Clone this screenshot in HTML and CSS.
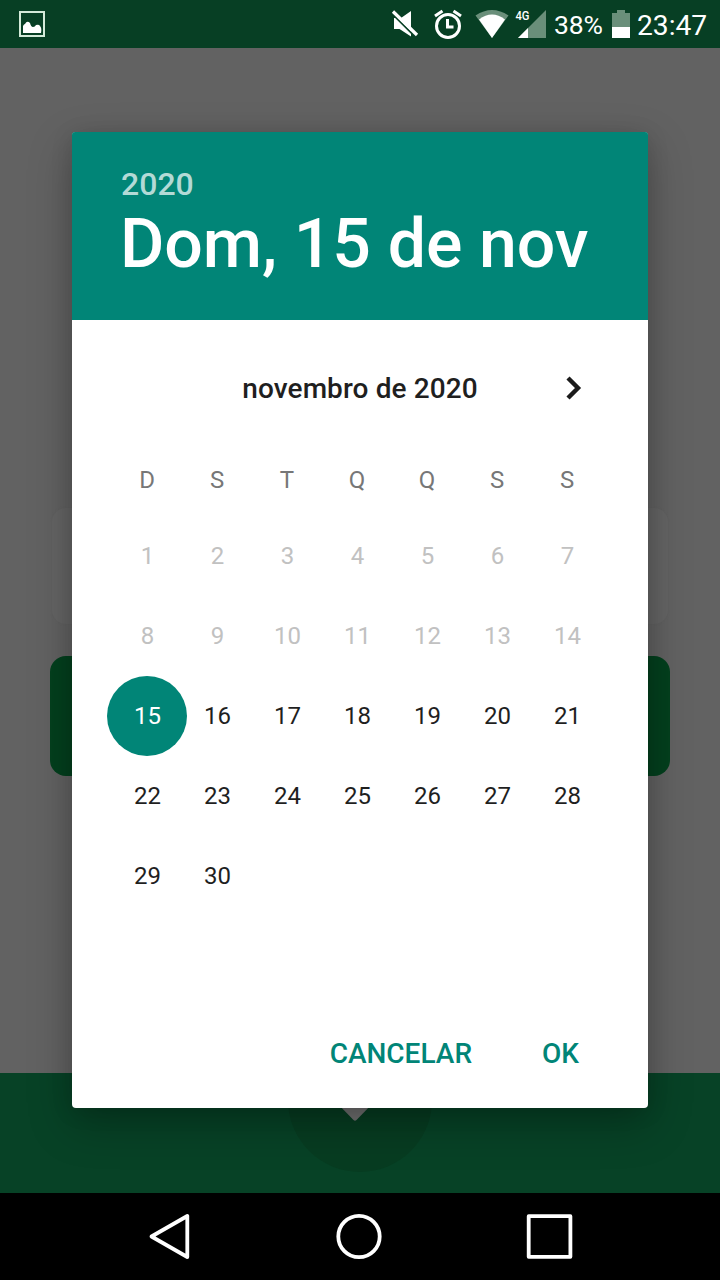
FILE: index.html
```html
<!DOCTYPE html>
<html lang="pt-BR">
<head>
<meta charset="utf-8">
<title>Selecionar data</title>
<link rel="stylesheet" href="styles.css">
</head>
<body>
<div class="screen">
  <header class="status">
    <svg class="status-photo" width="26" height="26" viewBox="0 0 26 26"><rect x="1" y="1" width="24" height="24" fill="none" stroke="#d3ead9" stroke-width="2"/><path d="M4 22v-7q1-2 2-2 2-4 5-1 1 4 3 4 2 0 3-2 3-1 4 1 2 2 1 7z" fill="#fff"/></svg>
    <svg width="170" height="48" viewBox="380 0 170 48">
      <path d="M394 18h7l10-7v25.500l-11.500-7.500H394z" fill="#fff"/>
      <path d="M390 11.500l24 24" stroke="#073f24" stroke-width="1.800"/>
      <path d="M393 11.500l24 23.500" stroke="#fff" stroke-width="3.200"/>
      <circle cx="448" cy="26" r="11.500" fill="none" stroke="#fff" stroke-width="3"/>
      <path d="M447.500 19v8h6M435 16l7.500-5M453.500 11l7.500 5" fill="none" stroke="#fff" stroke-width="3"/>
      <path d="M475.500 15.500q16.500-11 33 0L492 38z" fill="#6a8f7a"/>
      <path d="M479 19.500q13-10 26 0L492 38z" fill="#fff"/>
      <path d="M518 38l28-28v28z" fill="#6a8f7a"/><path d="M518 38l10-10v10z" fill="#fff"/>
      <text class="network" x="515.500" y="20" textLength="14" lengthAdjust="spacingAndGlyphs">4G</text>
    </svg>
    <span class="battery-text">38%</span>
    <svg class="battery" width="18" height="28" viewBox="0 0 18 28"><path d="M0 3h5V0h8v3h5v14H0z" fill="#6a8f7a"/><path d="M0 17h18v11H0z" fill="#fff"/></svg>
    <span class="clock">23:47</span>
  </header>
  <main class="page">
    <div class="field"></div>
    <div class="submit"></div>
  </main>
  <footer class="tabs"><div class="fab"><svg width="40" height="40" viewBox="0 0 40 40"><path d="M20 0l20 20-18.500 19q-1.500 1.500-3 0L0 20z" fill="#707070"/></svg></div></footer>
  <nav class="system">
    <svg width="720" height="87" viewBox="0 1193 720 87" fill="none" stroke="#fff" stroke-width="3.800" stroke-linejoin="round"><path d="M151.500 1236.500l35.800-20.500v41z"/><circle cx="359" cy="1236.500" r="20.700"/><path d="M528.700 1216.200h41.700v40.600h-41.700z"/></svg>
  </nav>
  <section class="dialog">
    <div class="dialog-head"><div class="year">2020</div><div class="date">Dom, 15 de nov</div></div>
    <div class="month"><span class="month-name">novembro de 2020</span>
      <svg class="next" width="16" height="24" viewBox="0 0 16 24"><path d="M2 2L12 12 2 22" fill="none" stroke="#1b1b1b" stroke-width="4.400"/></svg></div>
    <div class="weekdays"><span>D</span><span>S</span><span>T</span><span>Q</span><span>Q</span><span>S</span><span>S</span></div>
    <div class="days">
      <span class="past">1</span><span class="past">2</span><span class="past">3</span><span class="past">4</span><span class="past">5</span><span class="past">6</span><span class="past">7</span>
      <span class="past">8</span><span class="past">9</span><span class="past">10</span><span class="past">11</span><span class="past">12</span><span class="past">13</span><span class="past">14</span>
      <span class="selected">15</span><span>16</span><span>17</span><span>18</span><span>19</span><span>20</span><span>21</span>
      <span>22</span><span>23</span><span>24</span><span>25</span><span>26</span><span>27</span><span>28</span>
      <span>29</span><span>30</span>
    </div>
    <div class="actions"><span>CANCELAR</span><span>OK</span></div>
  </section>
</div>
</body>
</html>
```

FILE: styles.css
```css
body { margin: 0; font-family: Roboto, sans-serif; }
svg { display: block; }
.screen { position: relative; width: 720px; height: 1280px; overflow: hidden; display: flex; flex-direction: column; background: #626262; }
.status { height: 48px; flex: none; display: flex; align-items: center; background: #073f24; color: #fff; }
.status-photo { margin: 0 335px 0 19px; }
.network { font: 500 12px Roboto, sans-serif; fill: #fff; }
.battery-text { width: 62px; padding: 2px 0 0 4px; box-sizing: border-box; font-size: 26.5px; letter-spacing: -0.2px; line-height: 48px; }
.battery { flex: none; }
.clock { margin-left: 7px; padding-top: 3px; font-size: 28.2px; line-height: 48px; }
.page { height: 1025px; flex: none; display: flex; flex-direction: column; align-items: center; padding-top: 460px; box-sizing: border-box; }
.field { width: 616px; height: 116px; border-radius: 14px; background: #656565; box-shadow: 0 0 2px #606060; }
.submit { width: 620px; height: 120px; margin-top: 32px; border-radius: 16px; background: #04401e; }
.tabs { height: 120px; flex: none; display: flex; justify-content: center; background: #074226; }
.fab { width: 144px; height: 144px; margin-top: -45px; border-radius: 50%; background: #073c21; display: flex; justify-content: center; }
.fab svg { margin: 53px 10px 0 0; }
.system { height: 87px; background: #000; }
.dialog { position: absolute; left: 72px; top: 132px; width: 576px; height: 976px; border-radius: 4px; background: #fff; color: #1f1f1f; box-shadow: 0 16px 44px rgba(0,0,0,.26), 0 3px 22px rgba(0,0,0,.12); }
.dialog-head { height: 188px; box-sizing: border-box; padding: 33px 49px 0; border-radius: 3px 3px 0 0; background: #018577; color: #fff; font-weight: 500; }
.year { font-size: 32px; line-height: 38px; color: #b3dad6; }
.date { margin-top: 1px; font-size: 68px; line-height: 80px; letter-spacing: -0.1px; text-indent: -1px; white-space: nowrap; }
.month { height: 136px; display: grid; grid-template-columns: 1fr 236px 1fr; align-items: center; }
.month-name { grid-column: 2; text-align: center; font-size: 28px; letter-spacing: 0.1px; font-weight: 500; white-space: nowrap; }
.next { justify-self: start; margin-left: 88px; }
.weekdays, .days { display: grid; grid-template-columns: repeat(7, 70px); justify-content: start; padding-left: 40px; font-size: 24px; text-align: center; }
.weekdays { line-height: 48px; color: #777; }
.days { margin-top: 12px; grid-auto-rows: 80px; line-height: 80px; letter-spacing: -0.2px; }
.days span { text-indent: 0.8px; }
.past { color: #c1c1c1; }
.selected { width: 80px; margin-left: -5px; border-radius: 50%; background: #018577; color: #fff; }
.actions { display: flex; justify-content: flex-end; gap: 70px; margin-top: 114px; padding: 0 69px; font-size: 28px; line-height: 48px; font-weight: 500; color: #018577; }
```
